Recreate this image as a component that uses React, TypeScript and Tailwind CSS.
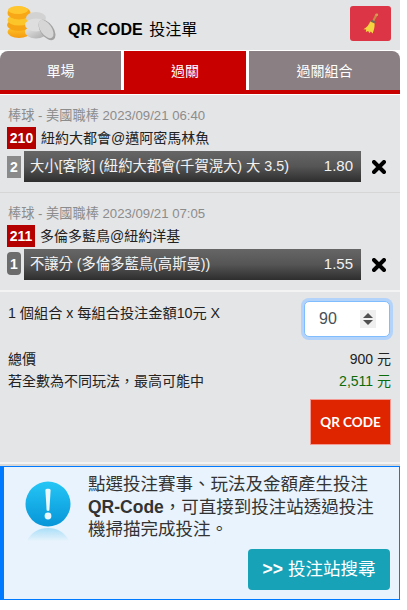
const games = [
  {
    time: '棒球 - 美國職棒 2023/09/21 06:40',
    no: '210',
    noClass: 'w-[29px]',
    match: '紐約大都會@邁阿密馬林魚',
    count: '2',
    countClass: 'bg-[#8a8a8a] h-[22px] mt-[5px]',
    bet: '大小[客隊] (紐約大都會(千賀滉大) 大 3.5)',
    odds: '1.80',
  },
  {
    time: '棒球 - 美國職棒 2023/09/21 07:05',
    no: '211',
    noClass: 'w-[28px]',
    match: '多倫多藍鳥@紐約洋基',
    count: '1',
    countClass: 'bg-[#6c6c6c] rounded-[4px] h-[23px] mt-[3px]',
    bet: '不讓分 (多倫多藍鳥(高斯曼))',
    odds: '1.55',
  },
]

function Coins() {
  return (
    <svg width="50" height="37" viewBox="0 0 50 37" className="block">
      <defs>
        <linearGradient id="gold" x1="0" y1="0" x2="0" y2="1">
          <stop offset="0" stopColor="#ffc928" />
          <stop offset="1" stopColor="#f59a10" />
        </linearGradient>
        <linearGradient id="silver" x1="0" y1="0" x2="1" y2="1">
          <stop offset="0" stopColor="#ececec" />
          <stop offset="1" stopColor="#a8a8a8" />
        </linearGradient>
      </defs>
      <ellipse cx="12" cy="27" rx="11.5" ry="6" fill="url(#gold)" />
      <ellipse cx="11.5" cy="20" rx="11.5" ry="6" fill="#f6a414" />
      <ellipse cx="12" cy="15" rx="11.5" ry="5.5" fill="#fcc52a" />
      <ellipse cx="12" cy="8" rx="11.5" ry="6.5" fill="#f8a816" />
      <ellipse cx="11" cy="5" rx="10" ry="4" fill="#ffc62e" />
      <ellipse cx="29" cy="13" rx="10" ry="6" fill="#d2d2d2" />
      <ellipse cx="29" cy="27" rx="11" ry="6.5" fill="url(#silver)" />
      <ellipse cx="29" cy="20" rx="11" ry="6.5" fill="#dedede" />
      <ellipse cx="40" cy="25" rx="6.5" ry="11.5" transform="rotate(-35 40 25)" fill="#a2a2a2" />
      <ellipse cx="39" cy="24" rx="5.5" ry="10.5" transform="rotate(-35 39 24)" fill="#d6d6d6" />
    </svg>
  )
}

function Broom() {
  return (
    <svg width="16" height="21" viewBox="0 0 16 21" className="block">
      <path d="M15 1 L12.6 0.8 L9.4 7.5 L11.2 8.4 Z" fill="#c98a44" />
      <circle cx="13.8" cy="1.8" r="1.4" fill="#d89a55" />
      <path d="M8.2 6.6 L12.2 8.6 L11.4 10.4 L7.4 8.4 Z" fill="#6b6f5a" />
      <path d="M7.2 8.4 L11.6 10.4 C11.8 14 10.8 17.6 9.6 20.4 L7.8 18.4 L6.4 20.2 L5.2 18 L2.8 19 L3.2 16.4 L0.4 16.2 C3.8 14.4 6 11.6 7.2 8.4 Z" fill="#f3d53f" />
    </svg>
  )
}

function AlertIcon() {
  return (
    <svg width="46" height="62" viewBox="0 0 46 62" className="block">
      <defs>
        <linearGradient id="ball" x1="0" y1="0" x2="0" y2="1">
          <stop offset="0" stopColor="#25c6f6" />
          <stop offset="1" stopColor="#0795d8" />
        </linearGradient>
        <linearGradient id="shine" x1="0" y1="0" x2="0" y2="1">
          <stop offset="0" stopColor="#a9def7" />
          <stop offset="1" stopColor="#e8f3fd" />
        </linearGradient>
      </defs>
      <circle cx="23" cy="23" r="22.5" fill="url(#ball)" />
      <path d="M20.4 9 C20.4 7.4 25.6 7.4 25.6 9 L24.4 29 C24.3 30.2 21.7 30.2 21.6 29 Z" fill="#eaf8fe" />
      <circle cx="23" cy="35" r="3.4" fill="#eaf8fe" />
      <path d="M2 60 C6 51 14 47 23 47 C32 47 40 51 44 60 Z" fill="url(#shine)" />
    </svg>
  )
}

function Spinner() {
  return (
    <span className="flex h-[18px] w-4 flex-col items-center justify-center gap-[2px] bg-[#efefef]">
      <svg width="10" height="5" viewBox="0 0 10 5" className="block">
        <path d="M0 5 L5 0 L10 5 Z" fill="#505050" />
      </svg>
      <svg width="10" height="5" viewBox="0 0 10 5" className="block">
        <path d="M0 0 L5 5 L10 0 Z" fill="#505050" />
      </svg>
    </span>
  )
}

export default function App() {
  return (
    <div className="w-[400px] bg-white font-['Liberation_Sans','Noto_Sans_CJK_TC',sans-serif]">
      <header className="flex h-[50px] items-start bg-[#e3e4e6]">
        <div className="mt-[5px] ml-[7px]">
          <Coins />
        </div>
        <h1 className="mt-[19px] ml-[11px] text-base leading-[22px] font-bold text-black">
          QR CODE <span className="ml-[2px] font-normal">投注單</span>
        </h1>
        <button className="mt-[6px] mr-[9px] ml-auto flex h-[35px] w-[41px] items-center justify-center rounded-[3px] bg-[#dc3545]">
          <Broom />
        </button>
      </header>

      <nav className="mt-px flex h-[39px] gap-[3px] text-sm text-white">
        <div className="flex w-[121px] items-center justify-center rounded-tl-lg bg-[#8a7f83]">單場</div>
        <div className="flex w-[122px] items-center justify-center bg-[#c80000]">過關</div>
        <div className="flex flex-1 items-center justify-center rounded-tr-lg bg-[#8a7f83]">過關組合</div>
      </nav>
      <div className="h-1 bg-[#c80000]" />

      <div className="mt-px bg-[#e4e5e7]">
        {games.map(g => (
          <section key={g.no} className="border-b border-[#d6d6d6] pt-[12px] pb-[10px] pl-[7px] [&+section]:border-b-2 [&+section]:border-[#f3f3f3]">
            <p className="pl-px text-[13.2px] leading-[18px] text-[#8c8c8c]">{g.time}</p>
            <div className="mt-[2px] flex h-[22px] items-center gap-[5px]">
              <span className={`flex h-[22px] items-center justify-center bg-[#b50000] text-sm font-bold text-white ${g.noClass}`}>{g.no}</span>
              <span className="text-sm text-[#222]">{g.match}</span>
            </div>
            <div className="mt-[2px] flex items-start">
              <span className={`flex w-[14px] items-center justify-center text-sm font-bold text-white ${g.countClass}`}>{g.count}</span>
              <div className="ml-[3px] flex h-[31px] w-[337px] items-center justify-between bg-gradient-to-b from-[#666666] via-[#555555] to-[#2e2e2e] pr-2 pl-[6px] text-[#f2f2f2]">
                <span className="text-[14.3px]">{g.bet}</span>
                <span className="text-[15px]">{g.odds}</span>
              </div>
              <svg width="14" height="14" viewBox="0 0 14 14" className="mt-[9px] ml-[11px] block">
                <path d="M2 2 L12 12 M12 2 L2 12" stroke="#000" strokeWidth="4" strokeLinecap="round" />
              </svg>
            </div>
          </section>
        ))}

        <section className="pt-[9px] pr-[9px] pb-[17px] pl-[8px] text-[#222]">
          <div className="flex items-start justify-between">
            <p className="mt-[2px] text-[14.2px] leading-5">1 個組合 x 每組合投注金額10元 X</p>
            <div className="mr-px flex h-[36px] w-[86px] items-center justify-between rounded-[5px] border border-[#80bdff] bg-white pr-[13px] pl-[14px] text-base text-[#495057] shadow-[0_0_0_3px_#b3d3fa]">
              90
              <Spinner />
            </div>
          </div>
          <div className="mt-[11px] flex justify-between text-sm leading-[22px]">
            <span>總價</span>
            <span>900 元</span>
          </div>
          <div className="flex justify-between text-sm leading-[22px]">
            <span>若全數為不同玩法，最高可能中</span>
            <span className="text-[#0a6b0a]">2,511 元</span>
          </div>
          <div className="mt-[7px] flex justify-end">
            <button className="h-[46px] w-[81px] border border-[#f49a94] bg-[#de2500] font-['Lato',sans-serif] text-[13.5px] font-bold text-white">
              QR CODE
            </button>
          </div>
        </section>
      </div>

      <div className="h-[2px] bg-[#d8d8d8]" />
      <aside className="flex h-[134px] border border-l-[4px] border-[#007bff] bg-[#e8f3fd]">
        <div className="mt-[14px] ml-[21px] shrink-0">
          <AlertIcon />
        </div>
        <div className="flex flex-1 flex-col pt-[6px] pl-[17px]">
          <p className="pr-[9px] text-[17.5px] leading-[22.5px] text-[#333]">
            點選投注賽事、玩法及金額產生投注<br />
            <b className="font-bold">QR-Code</b>，可直接到投注站透過投注<br />
            機掃描完成投注。
          </p>
          <div className="mt-[8px] flex justify-end pr-[9px]">
            <button className="h-[41px] w-[142px] rounded-[4px] bg-[#17a2b8] text-[17.5px] text-white">
              <b className="font-bold">&gt;&gt;</b> 投注站搜尋
            </button>
          </div>
        </div>
      </aside>
    </div>
  )
}
